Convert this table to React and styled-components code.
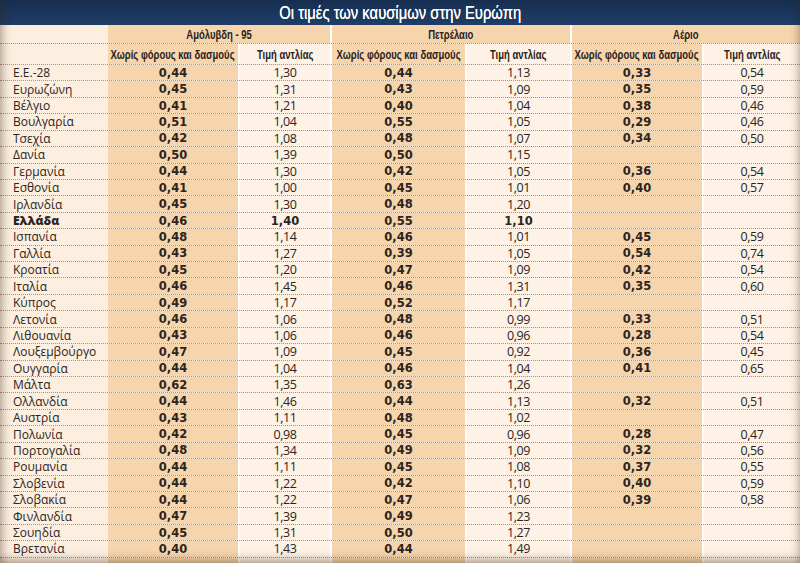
import React from "react";
import styled, { createGlobalStyle } from "styled-components";

const GlobalStyle = createGlobalStyle`
  html, body { margin: 0; padding: 0; background: #fcefe0; }
  * { box-sizing: border-box; }
`;

const COLS = "108px 130px 92px 135px 105px 132px 98px";
const ROW_H = 16.43;

const TONES = {
  label: "#fcefdf",
  dark: "#f6d5ad",
  light: "#fdf2e5",
};

const Frame = styled.div`
  position: relative;
  width: 800px;
  height: 563px;
  overflow: hidden;
  display: flex;
  flex-direction: column;
  background: #fcefdf;
  color: #2b2420;
  &::after {
    content: "";
    position: absolute;
    inset: 0;
    pointer-events: none;
    box-shadow:
      inset 9px 0 9px -6px rgba(60, 40, 20, 0.35),
      inset -8px 0 9px -6px rgba(60, 40, 20, 0.3),
      inset 0 -9px 9px -5px rgba(60, 40, 20, 0.35);
  }
`;

const TitleBar = styled.div`
  height: 25px;
  flex: none;
  display: flex;
  align-items: center;
  justify-content: center;
  background: linear-gradient(180deg, #172f52 0%, #1f3d66 100%);
  padding-top: 1px;
`;

const TitleText = styled.span`
  display: inline-block;
  flex: none;
  color: #ffffff;
  font-family: "Liberation Sans", "Arimo", sans-serif;
  font-size: 18.5px;
  transform: scaleX(0.8);
  text-shadow: 0 0 0.4px #fff;
`;

const Row = styled.div`
  display: grid;
  grid-template-columns: ${COLS};
  height: ${(p) => p.$h}px;
  flex: none;
  border-bottom: 1px dotted #a39583;
`;

const FillRow = styled.div`
  display: grid;
  grid-template-columns: ${COLS};
  flex: 1;
`;

const Cell = styled.div`
  background: ${(p) => TONES[p.$tone]};
  grid-column: ${(p) => (p.$span ? `span ${p.$span}` : "auto")};
  border-left: ${(p) =>
    p.$sep === "group"
      ? "2px solid #ffffff"
      : p.$sep === "col"
      ? "2px solid rgba(255,255,255,0.75)"
      : "none"};
  display: flex;
  align-items: center;
  justify-content: ${(p) => (p.$tone === "label" ? "flex-start" : "center")};
  padding-left: ${(p) => (p.$tone === "label" ? "13px" : "0")};
  white-space: nowrap;
  overflow: hidden;
`;

const HeadText = styled.span`
  display: inline-block;
  flex: none;
  font-family: "Liberation Sans", "Arimo", sans-serif;
  font-weight: 700;
  font-size: 12.5px;
  color: #2a211c;
  transform: scaleX(0.76);
  padding-top: 1px;
`;

const LabelText = styled.span`
  font-family: "Open Sans", "DejaVu Sans", sans-serif;
  font-size: 12px;
  font-weight: ${(p) => (p.$bold ? 800 : 400)};
  color: #2b2420;
`;

const NumText = styled.span`
  font-family: ${(p) =>
    p.$bold ? '"DejaVu Sans", "Open Sans", sans-serif' : '"Open Sans", "DejaVu Sans", sans-serif'};
  font-size: ${(p) => (p.$bold ? "11.5px" : "12.5px")};
  font-weight: ${(p) => (p.$bold ? 700 : 400)};
  color: #2b2420;
  letter-spacing: ${(p) => (p.$bold ? "0" : "-0.4px")};
`;

const DATA = [
  ["Ε.Ε.-28", "0,44", "1,30", "0,44", "1,13", "0,33", "0,54"],
  ["Ευρωζώνη", "0,45", "1,31", "0,43", "1,09", "0,35", "0,59"],
  ["Βέλγιο", "0,41", "1,21", "0,40", "1,04", "0,38", "0,46"],
  ["Βουλγαρία", "0,51", "1,04", "0,55", "1,05", "0,29", "0,46"],
  ["Τσεχία", "0,42", "1,08", "0,48", "1,07", "0,34", "0,50"],
  ["Δανία", "0,50", "1,39", "0,50", "1,15", "", ""],
  ["Γερμανία", "0,44", "1,30", "0,42", "1,05", "0,36", "0,54"],
  ["Εσθονία", "0,41", "1,00", "0,45", "1,01", "0,40", "0,57"],
  ["Ιρλανδία", "0,45", "1,30", "0,48", "1,20", "", ""],
  ["Ελλάδα", "0,46", "1,40", "0,55", "1,10", "", "", true],
  ["Ισπανία", "0,48", "1,14", "0,46", "1,01", "0,45", "0,59"],
  ["Γαλλία", "0,43", "1,27", "0,39", "1,05", "0,54", "0,74"],
  ["Κροατία", "0,45", "1,20", "0,47", "1,09", "0,42", "0,54"],
  ["Ιταλία", "0,46", "1,45", "0,46", "1,31", "0,35", "0,60"],
  ["Κύπρος", "0,49", "1,17", "0,52", "1,17", "", ""],
  ["Λετονία", "0,46", "1,06", "0,48", "0,99", "0,33", "0,51"],
  ["Λιθουανία", "0,43", "1,06", "0,46", "0,96", "0,28", "0,54"],
  ["Λουξεμβούργο", "0,47", "1,09", "0,45", "0,92", "0,36", "0,45"],
  ["Ουγγαρία", "0,44", "1,04", "0,46", "1,04", "0,41", "0,65"],
  ["Μάλτα", "0,62", "1,35", "0,63", "1,26", "", ""],
  ["Ολλανδία", "0,44", "1,46", "0,44", "1,13", "0,32", "0,51"],
  ["Αυστρία", "0,43", "1,11", "0,48", "1,02", "", ""],
  ["Πολωνία", "0,42", "0,98", "0,45", "0,96", "0,28", "0,47"],
  ["Πορτογαλία", "0,48", "1,34", "0,49", "1,09", "0,32", "0,56"],
  ["Ρουμανία", "0,44", "1,11", "0,45", "1,08", "0,37", "0,55"],
  ["Σλοβενία", "0,44", "1,22", "0,42", "1,10", "0,40", "0,59"],
  ["Σλοβακία", "0,44", "1,22", "0,47", "1,06", "0,39", "0,58"],
  ["Φινλανδία", "0,47", "1,39", "0,49", "1,23", "", ""],
  ["Σουηδία", "0,45", "1,31", "0,50", "1,27", "", ""],
  ["Βρετανία", "0,40", "1,43", "0,44", "1,49", "", ""],
];

const VALUE_COLS = [
  { tone: "dark", sep: null, bold: true },
  { tone: "light", sep: "col", bold: false },
  { tone: "dark", sep: "group", bold: true },
  { tone: "light", sep: "col", bold: false },
  { tone: "dark", sep: "group", bold: true },
  { tone: "light", sep: "col", bold: false },
];

const GROUPS = ["Αμόλυβδη - 95", "Πετρέλαιο", "Αέριο"];

export default function App() {
  return (
    <>
      <GlobalStyle />
      <Frame>
        <TitleBar>
          <TitleText>Οι τιμές των καυσίμων στην Ευρώπη</TitleText>
        </TitleBar>
        <Row $h={19}>
          <Cell $tone="label" />
          {GROUPS.map((g, i) => (
            <Cell key={g} $tone="dark" $span={2} $sep={i === 0 ? null : "group"}>
              <HeadText>{g}</HeadText>
            </Cell>
          ))}
        </Row>
        <Row $h={21}>
          <Cell $tone="label" />
          {VALUE_COLS.map((c, i) => (
            <Cell key={i} $tone={c.tone} $sep={c.sep}>
              <HeadText>{c.bold ? "Χωρίς φόρους και δασμούς" : "Τιμή αντλίας"}</HeadText>
            </Cell>
          ))}
        </Row>
        {DATA.map((r) => {
          const strong = r[7] === true;
          return (
            <Row key={r[0]} $h={ROW_H}>
              <Cell $tone="label">
                <LabelText $bold={strong}>{r[0]}</LabelText>
              </Cell>
              {VALUE_COLS.map((c, i) => (
                <Cell key={i} $tone={c.tone} $sep={c.sep}>
                  <NumText $bold={c.bold || strong}>{r[i + 1]}</NumText>
                </Cell>
              ))}
            </Row>
          );
        })}
        <FillRow>
          <Cell $tone="label" />
          {VALUE_COLS.map((c, i) => (
            <Cell key={i} $tone={c.tone} $sep={c.sep} />
          ))}
        </FillRow>
      </Frame>
    </>
  );
}
